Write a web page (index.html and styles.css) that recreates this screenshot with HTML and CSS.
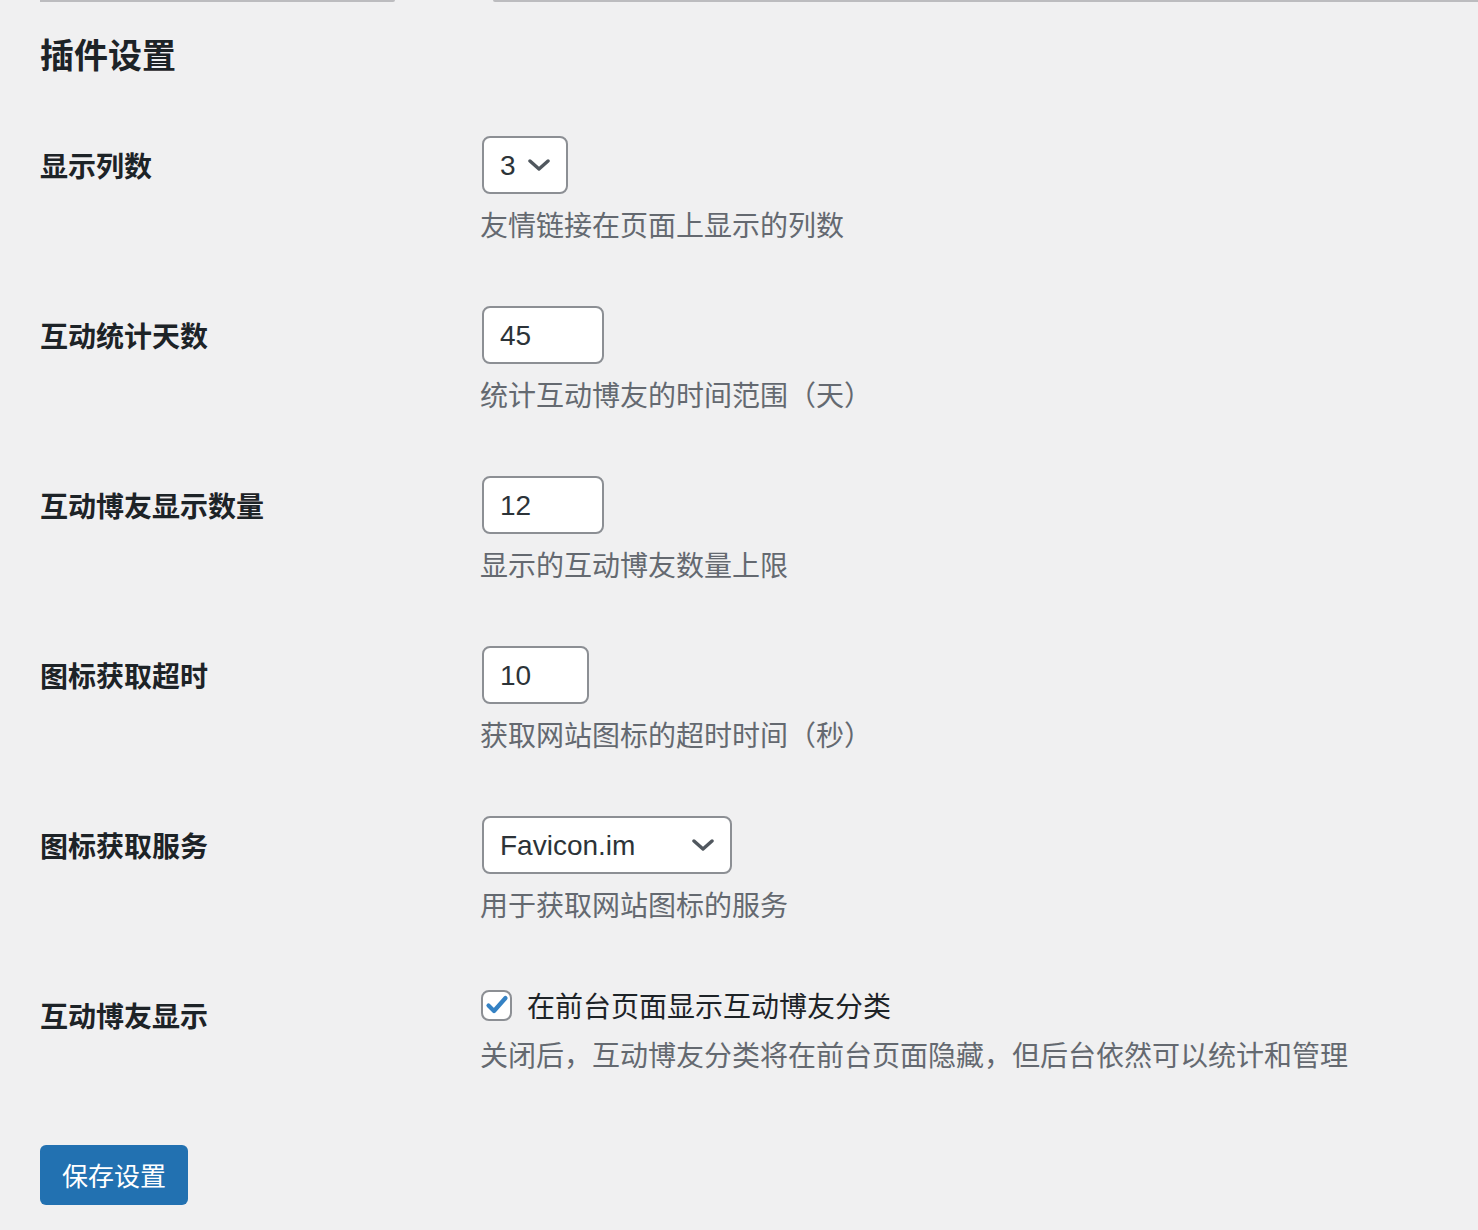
FILE: index.html
```html
<!DOCTYPE html>
<html lang="zh-CN">
<head>
<meta charset="utf-8">
<title>插件设置</title>
<link rel="stylesheet" href="styles.css">
</head>
<body>
<div class="wrap">
  <div class="tabs">
    <span class="tab-line tab-left"></span>
    <span class="tab-gap"></span>
    <span class="tab-line tab-right"></span>
  </div>
  <h2 class="title">插件设置</h2>
  <form class="settings">
    <div class="row">
      <div class="label">显示列数</div>
      <div class="field">
        <div class="control select w-cols"><span class="value">3</span>
          <svg class="chev" viewBox="0 0 22 12" width="22" height="12"><path d="M2 2 L11 10 L20 2" fill="none" stroke="#50575e" stroke-width="3.4" stroke-linecap="round" stroke-linejoin="round"/></svg>
        </div>
        <p class="desc">友情链接在页面上显示的列数</p>
      </div>
    </div>
    <div class="row">
      <div class="label">互动统计天数</div>
      <div class="field">
        <div class="control input w-num"><span class="value">45</span></div>
        <p class="desc">统计互动博友的时间范围（天）</p>
      </div>
    </div>
    <div class="row">
      <div class="label">互动博友显示数量</div>
      <div class="field">
        <div class="control input w-num"><span class="value">12</span></div>
        <p class="desc">显示的互动博友数量上限</p>
      </div>
    </div>
    <div class="row">
      <div class="label">图标获取超时</div>
      <div class="field">
        <div class="control input w-small"><span class="value">10</span></div>
        <p class="desc">获取网站图标的超时时间（秒）</p>
      </div>
    </div>
    <div class="row">
      <div class="label">图标获取服务</div>
      <div class="field">
        <div class="control select w-service"><span class="value">Favicon.im</span>
          <svg class="chev" viewBox="0 0 22 12" width="22" height="12"><path d="M2 2 L11 10 L20 2" fill="none" stroke="#50575e" stroke-width="3.4" stroke-linecap="round" stroke-linejoin="round"/></svg>
        </div>
        <p class="desc">用于获取网站图标的服务</p>
      </div>
    </div>
    <div class="row">
      <div class="label">互动博友显示</div>
      <div class="field">
        <label class="check-line">
          <span class="checkbox">
            <svg viewBox="0 0 24 24" width="24" height="24"><path d="M3.5 12.5 L9 18 L20.5 5" fill="none" stroke="#3582c4" stroke-width="4.2" stroke-linecap="round" stroke-linejoin="round"/></svg>
          </span>
          <span class="check-text">在前台页面显示互动博友分类</span>
        </label>
        <p class="desc desc-check">关闭后，互动博友分类将在前台页面隐藏，但后台依然可以统计和管理</p>
      </div>
    </div>
  </form>
  <div class="submit">
    <button class="button-primary" type="button">保存设置</button>
  </div>
</div>
</body>
</html>
```

FILE: styles.css
```css
html, body {
  margin: 0;
  padding: 0;
  background: #f0f0f1;
}

body {
  font-family: "Liberation Sans", "Noto Sans CJK SC", sans-serif;
  color: #1d2327;
  width: 1478px;
  min-height: 1230px;
}

.wrap {
  padding-left: 40px;
}

.tabs {
  display: flex;
  height: 2px;
}

.tab-line {
  display: block;
  height: 2px;
  background: #bcbcbf;
}

.tab-left {
  width: 355px;
  border-radius: 0 0 2px 0;
}

.tab-gap {
  width: 98px;
}

.tab-right {
  flex: 1;
  border-radius: 0 0 0 2px;
}

.title {
  margin: 29px 0 28px 0;
  font-family: "Noto Sans CJK SC", sans-serif;
  font-size: 34px;
  line-height: 46px;
  font-weight: 700;
  color: #1d2327;
}

.settings {
  margin: 0;
}

.row {
  display: grid;
  grid-template-columns: 440px 1fr;
  padding: 31px 0;
}

.label {
  font-family: "Noto Sans CJK SC", sans-serif;
  font-size: 28px;
  line-height: 58px;
  font-weight: 700;
  color: #1d2327;
}

.field {
  display: flex;
  flex-direction: column;
  align-items: flex-start;
}

.control {
  box-sizing: border-box;
  height: 58px;
  margin-left: 2px;
  display: flex;
  align-items: center;
  background: #fff;
  border: 2px solid #8c8f94;
  border-radius: 8px;
  padding: 0 16px;
  font-family: "Liberation Sans", sans-serif;
  font-size: 28px;
  color: #2c3338;
}

.value {
  padding-top: 2px;
}

.select {
  justify-content: space-between;
}

.w-cols {
  width: 86px;
}

.w-num {
  width: 122px;
}

.w-small {
  width: 107px;
}

.w-service {
  width: 250px;
}

.chev {
  display: block;
}

.w-cols .chev {
  margin-left: 8px;
}

.desc {
  margin: 10px 0 0 0;
  font-family: "Noto Sans CJK SC", sans-serif;
  font-size: 28px;
  line-height: 40px;
  color: #646970;
}

.check-line {
  display: flex;
  align-items: center;
  height: 38px;
}

.checkbox {
  box-sizing: border-box;
  width: 31px;
  height: 31px;
  margin-left: 1px;
  border: 2px solid #8c8f94;
  border-radius: 8px;
  background: #fff;
  display: flex;
  align-items: center;
  justify-content: center;
}

.check-text {
  margin-left: 15px;
  font-family: "Noto Sans CJK SC", sans-serif;
  font-size: 28px;
  line-height: 38px;
  color: #1d2327;
}

.desc-check {
  margin-top: 10px;
}

.submit {
  padding-top: 40px;
}

.button-primary {
  display: block;
  box-sizing: border-box;
  width: 148px;
  height: 60px;
  padding: 0;
  border: 0;
  border-radius: 6px;
  background: #2271b1;
  color: #fff;
  font-family: "Noto Sans CJK SC", sans-serif;
  font-size: 26px;
  line-height: 60px;
  text-align: center;
}
```
